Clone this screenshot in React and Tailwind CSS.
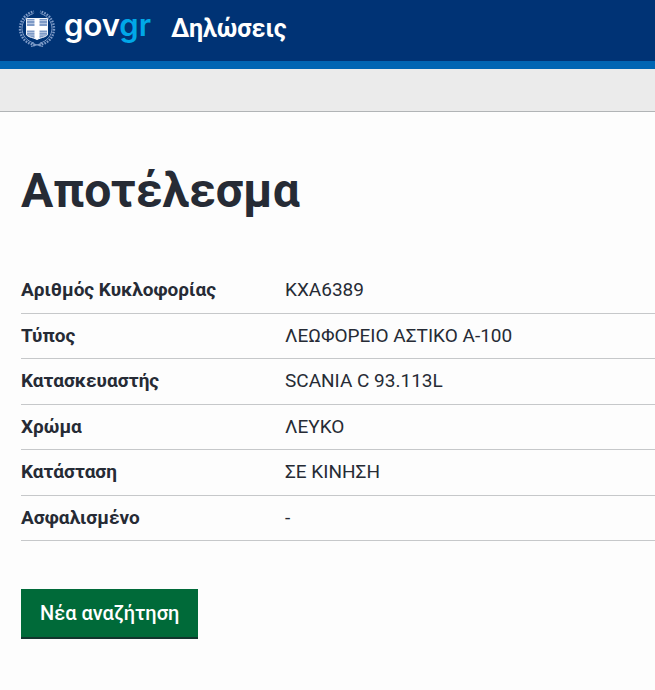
import React from 'react';

const rows = [
  { label: 'Αριθμός Κυκλοφορίας', value: 'KXA6389' },
  { label: 'Τύπος', value: 'ΛΕΩΦΟΡΕΙΟ ΑΣΤΙΚΟ Α-100' },
  { label: 'Κατασκευαστής', value: 'SCANIA C 93.113L' },
  { label: 'Χρώμα', value: 'ΛΕΥΚΟ' },
  { label: 'Κατάσταση', value: 'ΣΕ ΚΙΝΗΣΗ' },
  { label: 'Ασφαλισμένο', value: '-' },
];

// Shield with a cross inside a laurel wreath
function Emblem() {
  return (
    <svg width="38" height="38" viewBox="0 0 38 38" fill="none" aria-hidden="true">
      <g stroke="#7f9cc8">
        <path d="M17 35C8 34 2 27 2 18.500C2 10.500 8 3 16 1.500" strokeWidth="2.400" strokeDasharray="1.600 1.200" />
        <path d="M21 35C30 34 36 27 36 18.500C36 10.500 30 3 22 1.500" strokeWidth="2.400" strokeDasharray="1.600 1.200" />
        <path d="M16 33C9 31.500 4 25 4 18.500C4 12 8.500 5.500 15.500 3.500M22 33C29 31.500 34 25 34 18.500C34 12 29.500 5.500 22.500 3.500" strokeWidth="1" />
        <path d="M13 36.500L24 33.500M25 36.500L14 33.500" strokeWidth="1.200" />
      </g>
      <path d="M8.500 8.500H29.500V24C29.500 27 24 27 19 29.500C14 27 8.500 27 8.500 24Z" fill="#7e9ac6" />
      <path d="M9 10.500H29M9 13.500H29M9 22.500H29M10 25H28" stroke="#b4c5e0" />
      <path d="M16.500 8.500H21.500V16H29.500V20.500H21.500V28.500L19 29.500L16.500 28.500V20.500H8.500V16H16.500Z" fill="#fff" />
      <path d="M8.500 8.500H29.500V24C29.500 27 24 27 19 29.500C14 27 8.500 27 8.500 24Z" stroke="#f1f5fb" />
    </svg>
  );
}

function Header() {
  return (
    <header className="border-b-8 border-[#0065b3] bg-[#003375]">
      <div className="flex h-[61px] items-center px-[18px] text-white">
        <a href="#home" className="flex items-center gap-2 pb-1" aria-label="govgr">
          <Emblem />
          <span className="pb-2 font-['Inter',sans-serif] text-[31px] leading-9 font-semibold">
            gov<span className="text-[#00a8e8]">gr</span>
          </span>
        </a>
        <a href="#service" className="ml-5 pb-1 text-[25px] font-bold">
          Δηλώσεις
        </a>
      </div>
    </header>
  );
}

function SummaryRow({ label, value }) {
  return (
    <div className="flex border-b border-[#c6c8ca] py-2">
      <dt className="w-[264px] shrink-0 font-bold">{label}</dt>
      <dd>{value}</dd>
    </div>
  );
}

export default function App() {
  return (
    <div className="min-h-screen bg-[#fdfdfd] font-['Roboto',sans-serif] text-[#262b35]">
      <Header />
      <div className="h-[43px] border-b border-[#b1b4b6] bg-[#ebebeb]" />
      <main className="pt-[50px] pb-12 pl-[21px]">
        <h1 className="text-5xl leading-[58px] font-bold">Αποτέλεσμα</h1>
        <dl className="mt-12 text-[19px] leading-normal">
          {rows.map((row) => (
            <SummaryRow key={row.label} label={row.label} value={row.value} />
          ))}
        </dl>
        <button
          type="button"
          className="mt-12 h-[50px] cursor-pointer border-b-2 border-[#12352d] bg-[#006a39] px-[19px] text-xl font-medium text-white hover:bg-[#00562e]"
        >
          Νέα αναζήτηση
        </button>
      </main>
    </div>
  );
}
